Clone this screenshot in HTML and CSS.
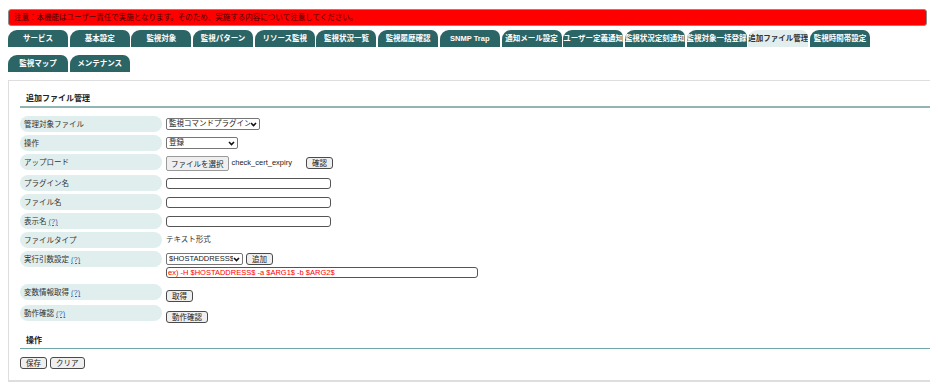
FILE: index.html
```html
<!DOCTYPE html>
<html lang="ja">
<head>
  <meta charset="UTF-8" />
  <title>追加ファイル管理</title>
  <link rel="stylesheet" href="styles.css">
</head>
<body>
  <div class="notice">注意：本機能はユーザー責任で実施となります。そのため、実施する内容について注意してください。</div>

  <ul class="tabs">
    <li class="tab">サービス</li>
    <li class="tab">基本設定</li>
    <li class="tab">監視対象</li>
    <li class="tab">監視パターン</li>
    <li class="tab">リソース監視</li>
    <li class="tab">監視状況一覧</li>
    <li class="tab">監視履歴確認</li>
    <li class="tab">SNMP Trap</li>
    <li class="tab">通知メール設定</li>
    <li class="tab">ユーザー定義通知</li>
    <li class="tab">監視状況定刻通知</li>
    <li class="tab">監視対象一括登録</li>
    <li class="tab active">追加ファイル管理</li>
    <li class="tab">監視時間帯設定</li>
    <li class="tab">監視マップ</li>
    <li class="tab">メンテナンス</li>
  </ul>

  <div class="panel">
    <h2 class="section-title">追加ファイル管理</h2>

    <div class="form">
      <div class="row">
        <div class="label">管理対象ファイル</div>
        <div class="value">
          <select class="select select-target">
            <option>監視コマンドプラグイン</option>
          </select>
        </div>
      </div>
      <div class="row">
        <div class="label">操作</div>
        <div class="value">
          <select class="select select-op">
            <option>登録</option>
          </select>
        </div>
      </div>
      <div class="row row-upload">
        <div class="label">アップロード</div>
        <div class="value">
          <div class="file-picker">
            <span class="file-btn">ファイルを選択</span>
            <span class="file-name">check_cert_expiry</span>
          </div>
          <button class="btn">確認</button>
        </div>
      </div>
      <div class="row">
        <div class="label">プラグイン名</div>
        <div class="value"><input class="text" type="text"></div>
      </div>
      <div class="row">
        <div class="label">ファイル名</div>
        <div class="value"><input class="text" type="text"></div>
      </div>
      <div class="row">
        <div class="label">表示名 <a class="help" href="#">(?)</a></div>
        <div class="value"><input class="text" type="text"></div>
      </div>
      <div class="row">
        <div class="label">ファイルタイプ</div>
        <div class="value">テキスト形式</div>
      </div>
      <div class="row row-args">
        <div class="label">実行引数設定 <a class="help" href="#">(?)</a></div>
        <div class="value value-stack">
          <div class="inline">
            <select class="select select-macro">
              <option>$HOSTADDRESS$</option>
            </select>
            <button class="btn">追加</button>
          </div>
          <input class="text text-args" type="text" value="ex) -H $HOSTADDRESS$ -a $ARG1$ -b $ARG2$">
        </div>
      </div>
      <div class="row row-btn">
        <div class="label">変数情報取得 <a class="help" href="#">(?)</a></div>
        <div class="value"><button class="btn">取得</button></div>
      </div>
      <div class="row row-btn">
        <div class="label">動作確認 <a class="help" href="#">(?)</a></div>
        <div class="value"><button class="btn">動作確認</button></div>
      </div>
    </div>

    <h2 class="section-title section-ops">操作</h2>
    <div class="actions">
      <button class="btn">保存</button>
      <button class="btn">クリア</button>
    </div>
  </div>
</body>
</html>
```

FILE: styles.css
```css
body {
  margin: 8px;
  font-family: "Liberation Sans", "Noto Sans CJK JP", sans-serif;
  font-size: 7.5px;
  color: #333;
  background-color: #fff;
  overflow: hidden;
}

.notice {
  margin-top: 1px;
  width: 909px;
  height: 15px;
  line-height: 15px;
  padding: 0 3px 0 5px;
  background-color: #ff0000;
  border: 1px solid #8a8a8a;
  border-radius: 3px;
  color: #4a0000;
}

.tabs {
  list-style: none;
  margin: 4px 0 0;
  padding: 0;
  width: 880px;
  display: flex;
  flex-wrap: wrap;
  column-gap: 1.7px;
  row-gap: 8px;
}

.tab {
  width: 60px;
  height: 17px;
  line-height: 18px;
  background-color: #2b6565;
  color: #fff;
  font-weight: bold;
  text-align: center;
  white-space: nowrap;
  overflow: hidden;
  border-radius: 9px 7px 0 0;
}

.tab.active {
  background-color: #e2eeee;
  color: #333;
}

.panel {
  margin: 8px -20px 0 0;
  padding: 0 13px 11px 11px;
  border: 1px solid #dedede;
  border-right: none;
  border-bottom-width: 2px;
}

.section-title {
  margin: 0;
  padding: 12px 0 1px 6px;
  font-size: 8px;
  line-height: 12px;
  font-weight: bold;
  color: #222;
  border-bottom: 2px solid #8fb5b5;
}

.section-ops {
  padding-top: 12px;
  border-bottom: 1.5px solid #70a8a8;
}

.form {
  margin-top: 8px;
  display: flex;
  flex-direction: column;
  gap: 3px;
}

.row {
  display: flex;
  align-items: flex-start;
  gap: 4px;
}

.label {
  width: 138px;
  height: 16px;
  line-height: 17px;
  padding-left: 4px;
  background-color: #e0eeee;
  border-radius: 8px;
  white-space: nowrap;
}

.help {
  color: #3a6aa8;
}

.value {
  min-height: 16px;
  display: flex;
  align-items: center;
  line-height: 16px;
}

.row-upload .value {
  min-height: 18px;
}

.row-btn .value {
  min-height: 18px;
  align-items: flex-end;
}

.value-stack {
  flex-direction: column;
  align-items: flex-start;
  gap: 2px;
  padding: 2px 0 3px;
}

.inline {
  display: flex;
  align-items: center;
  gap: 3px;
}

.select {
  -webkit-appearance: none;
  appearance: none;
  height: 12px;
  padding: 0 9px 0 2px;
  font-family: inherit;
  font-size: 7.5px;
  line-height: 10px;
  color: #222;
  border: 1px solid #767676;
  border-radius: 2px;
  background-color: #fff;
  background-image: url("data:image/svg+xml,%3Csvg xmlns='http://www.w3.org/2000/svg' width='7' height='5' viewBox='0 0 7 5'%3E%3Cpath d='M1 1l2.5 2.5L6 1' fill='none' stroke='%23111' stroke-width='1.6'/%3E%3C/svg%3E");
  background-repeat: no-repeat;
  background-position: right 2px center;
  background-size: 7px 5px;
}

.select-target {
  width: 94px;
}

.select-op {
  width: 72px;
}

.select-macro {
  width: 77px;
}

.file-picker {
  width: 136px;
  display: flex;
  align-items: center;
  gap: 3px;
}

.file-btn {
  height: 15px;
  line-height: 15px;
  padding: 0 4px;
  background-color: #efefef;
  border: 1px solid #9a9a9a;
  border-radius: 2px;
  color: #222;
  box-sizing: border-box;
}

.file-name {
  color: #222;
}

.btn {
  height: 12px;
  line-height: 9px;
  padding: 0 5px;
  margin-left: 4px;
  font-family: inherit;
  font-size: 7.5px;
  color: #222;
  background-color: #efefef;
  border: 1.5px solid #4a4a4a;
  border-radius: 3px;
}

.inline .btn,
.row-btn .btn {
  margin-left: 0;
}

.text {
  width: 165px;
  height: 11px;
  box-sizing: border-box;
  padding: 0 2px;
  font-family: inherit;
  font-size: 7.5px;
  border: 1.5px solid #555;
  border-radius: 3px;
}

.text-args {
  width: 312px;
  padding: 0 1px;
  color: #ff0000;
}

.actions {
  margin-top: 8px;
  display: flex;
  gap: 3px;
}

.actions .btn {
  margin-left: 0;
}
```
